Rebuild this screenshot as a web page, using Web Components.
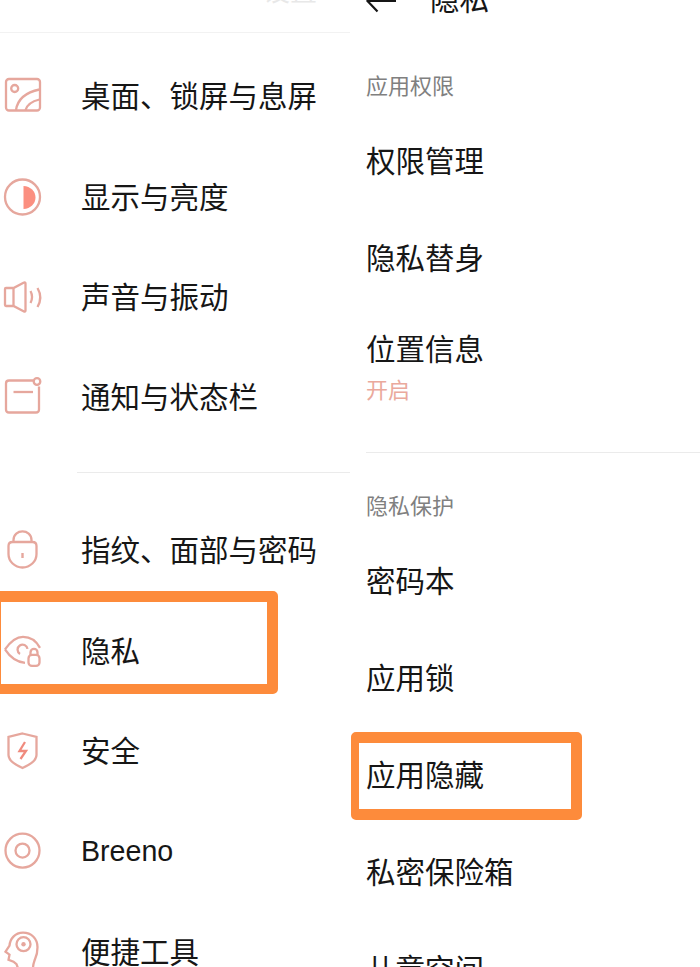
<!DOCTYPE html>
<html lang="zh">
<head>
<meta charset="utf-8">
<title>隐私</title>
<style>
  html, body { margin: 0; padding: 0; background: #fff; }
  body { width: 700px; height: 967px; overflow: hidden; font-family: "Liberation Sans", "Noto Sans CJK SC", sans-serif; }
</style>
</head>
<body>
<settings-shot>
  <settings-pane slot="left">
    <pane-top variant="main"></pane-top>
    <setting-row icon="wallpaper" first>桌面、锁屏与息屏</setting-row>
    <setting-row icon="display">显示与亮度</setting-row>
    <setting-row icon="sound">声音与振动</setting-row>
    <setting-row icon="notify">通知与状态栏</setting-row>
    <pane-divider inset="77" before="24.400" after="27"></pane-divider>
    <setting-row icon="lock">指纹、面部与密码</setting-row>
    <setting-row icon="privacy" mark>隐私</setting-row>
    <setting-row icon="shield">安全</setting-row>
    <setting-row icon="breeno" latin>Breeno</setting-row>
    <setting-row icon="head">便捷工具</setting-row>
  </settings-pane>
  <settings-pane slot="right">
    <pane-top variant="detail"></pane-top>
    <section-label top="18">应用权限</section-label>
    <plain-row>权限管理</plain-row>
    <plain-row>隐私替身</plain-row>
    <plain-row sub="开启">位置信息</plain-row>
    <pane-divider inset="16" before="0" after="0"></pane-divider>
    <section-label top="31">隐私保护</section-label>
    <plain-row>密码本</plain-row>
    <plain-row>应用锁</plain-row>
    <plain-row mark>应用隐藏</plain-row>
    <plain-row>私密保险箱</plain-row>
    <plain-row>儿童空间</plain-row>
  </settings-pane>
</settings-shot>

<script>
  // y = top of the 50x50 drawing window for each icon
  const ICONS = {
    wallpaper: { y: 71, d: `<rect x="6" y="79" width="34" height="31.500" rx="3" />
      <circle cx="14.700" cy="88.500" r="3.500" />
      <path d="M16 110c1.500-10 9-17.500 23.500-20.500M25.500 110c1.500-5 5.500-8.500 14-10.500" />` },
    display: { y: 170, d: `<circle cx="22.500" cy="195" r="17.500" />
      <path d="M23.500 184c7 .5 12 5 12 11.500s-5 11-12 11.500z" fill="#fb8f80" stroke="none" />` },
    sound: { y: 271, d: `<path d="M6 287h7.500l10.500-5.500c.7-.4 1.500 0 1.500 .9v27.200c0 .9-.8 1.300-1.500 .9l-10.500-5.500h-7.500c-.8 0-1-.5-1-1v-16c0-.5 .3-1 1-1z" />
      <path d="M13.500 287.500v17M30.500 290c1.800 3.500 1.800 8.500 0 12M37.500 287c3.500 6 3.500 13 0 19" />` },
    notify: { y: 372, d: `<path d="M33.500 380.500h-24.500c-2 0-3 1-3 3v26c0 2 1 3 3 3h27c2 0 3-1 3-3v-23" />
      <path d="M13.500 392h19.500" />
      <circle cx="37" cy="381.500" r="3.300" />` },
    lock: { y: 525, d: `<path d="M13.500 542v-2c0-11.500 18-11.500 18 0v2" />
      <path d="M8.500 546q0-4 4-4h20q4 0 4 4v8a14 13.500 0 0 1-28 0z" />
      <path d="M22.500 553v5" stroke-width="2.400" />` },
    privacy: { y: 625.600, d: `<path d="M5 649c7-10 13.500-12.500 18-12.500 6.500 0 13 3.500 17 11M5 649c4.500 7 10.500 12.500 20 13.500" />
      <path d="M27.500 648.500a5 5 0 1 0-7.500 5" />
      <rect x="28.500" y="654.500" width="11" height="11" rx="3.500" />
      <path d="M30.500 654.500v-2.500a3.500 3.500 0 0 1 7 0v2.500" />` },
    shield: { y: 726, d: `<path d="M22.500 733.500l14 3.500v18c0 5-6 9.500-14 13-8-3.500-14-8-14-13v-18z" />
      <path d="M25 742l-5.500 9h6.500l-5.500 8" stroke="#f08b7e" />` },
    breeno: { y: 826.400, d: `<circle cx="22.500" cy="851" r="17" />
      <circle cx="22.500" cy="851" r="7" />` },
    head: { y: 926.800, d: `<path d="M33 968c0-4 1-6 2-9 2-4 2.500-8 2.500-12 0-8.500-6-14.500-14.500-14.500-8 0-13 6-13.500 13l-4 6 4 3-1 5 5 2 3 2.500 1.500 4" />
      <circle cx="23.500" cy="944" r="7" />
      <circle cx="23.500" cy="944" r="2.200" fill="#e6a79d" stroke="none" />` }
  };

  // left and right panes side by side
  class SettingsShot extends HTMLElement {
    constructor() {
      super();
      this.attachShadow({ mode: 'open' });
      this.shadowRoot.innerHTML = `
        <style>
          :host { display: grid; grid-template-columns: 350px 350px; width: 700px; height: 967px; overflow: hidden; background: #fff; color: #161616; }
        </style>
        <slot name="left"></slot>
        <slot name="right"></slot>
      `;
    }
  }

  class SettingsPane extends HTMLElement {
    constructor() {
      super();
      this.attachShadow({ mode: 'open' });
      this.shadowRoot.innerHTML = `
        <style>
          :host { display: block; min-width: 0; height: 967px; }
        </style>
        <slot></slot>
      `;
    }
  }

  // the title strip, cut off by the top edge of the picture
  class PaneTop extends HTMLElement {
    constructor() {
      super();
      this.attachShadow({ mode: 'open' });
      const detail = this.getAttribute('variant') === 'detail';
      this.shadowRoot.innerHTML = `
        <style>
          :host { display: block; overflow: hidden; }
          .main { height: 32px; border-bottom: 1px solid #f2f2f2; overflow: hidden; }
          .main span { display: block; margin: -24px 0 0 263px; font-size: 27px; line-height: 32px; color: #e8e8e8; }
          .detail { height: 46px; display: flex; align-items: flex-start; }
          .detail svg { flex: none; width: 32px; height: 20px; margin: 0 32px 0 16px; }
          .detail span { font-size: 29.500px; line-height: 40px; margin-top: -20px; }
        </style>
        ${detail
          ? `<div class="detail">
               <svg viewBox="0 0 32 20"><path d="M30 1H1.500M11.500-8L1.500 1l10 10.500" fill="none" stroke="#161616" stroke-width="2.200"/></svg>
               <span>隐私</span>
             </div>`
          : `<div class="main"><span>设置</span></div>`}
      `;
    }
  }

  class PaneDivider extends HTMLElement {
    constructor() {
      super();
      this.attachShadow({ mode: 'open' });
      const a = (n) => this.getAttribute(n) + 'px';
      this.shadowRoot.innerHTML = `
        <style>
          :host { display: block; padding: ${a('before')} 0 ${a('after')} ${a('inset')}; }
          div { height: 1px; background: #ebebeb; }
        </style>
        <div></div>
      `;
    }
  }

  class SectionLabel extends HTMLElement {
    constructor() {
      super();
      this.attachShadow({ mode: 'open' });
      this.shadowRoot.innerHTML = `
        <style>
          :host { display: flex; align-items: center; height: 40px; padding: ${this.getAttribute('top')}px 0 8.500px 16px; font-size: 22px; color: #808080; }
        </style>
        <slot></slot>
      `;
    }
  }

  class SettingRow extends HTMLElement {
    constructor() {
      super();
      this.attachShadow({ mode: 'open' });
      const icon = ICONS[this.getAttribute('icon')];
      this.shadowRoot.innerHTML = `
        <style>
          :host { display: flex; align-items: center; position: relative; height: 100.400px; font-size: 29.500px; ${this.hasAttribute('first') ? 'margin-top: 13px;' : ''} }
          :host([latin]) { font-size: 28.600px; }
          svg { flex: none; width: 50px; height: 50px; margin-right: 31px; overflow: visible; }
          .text { padding-bottom: 4px; }
          :host([latin]) .text { padding-bottom: 0; }
          .mark { position: absolute; left: -10px; top: -9.400px; width: 266px; height: 82px; border: 11px solid #fd8b3b; border-bottom-width: 10px; border-radius: 5px; }
        </style>
        <svg viewBox="0 ${icon.y} 50 50" fill="none" stroke="#e6a79d" stroke-width="2.300">${icon.d}</svg>
        <div class="text"><slot></slot></div>
        ${this.hasAttribute('mark') ? '<div class="mark"></div>' : ''}
      `;
    }
  }

  class PlainRow extends HTMLElement {
    constructor() {
      super();
      this.attachShadow({ mode: 'open' });
      const sub = this.getAttribute('sub');
      this.shadowRoot.innerHTML = `
        <style>
          :host { display: block; position: relative; box-sizing: border-box; height: ${sub ? 145.5 : 97}px; padding: ${sub ? 17.5 : 23.5}px 0 0 16px; font-size: 29.500px; }
          .main { line-height: 52px; display: block; }
          .sub { font-size: 22px; line-height: 30px; color: #eaa99c; }
          .mark { position: absolute; left: 1px; top: 5.500px; width: 212px; height: 66px; border: 11px solid #fd8b3b; border-left-width: 8px; border-radius: 5px; }
        </style>
        <span class="main"><slot></slot></span>
        ${sub ? `<div class="sub">${sub}</div>` : ''}
        ${this.hasAttribute('mark') ? '<div class="mark"></div>' : ''}
      `;
    }
  }

  customElements.define('settings-shot', SettingsShot);
  customElements.define('settings-pane', SettingsPane);
  customElements.define('pane-top', PaneTop);
  customElements.define('pane-divider', PaneDivider);
  customElements.define('section-label', SectionLabel);
  customElements.define('setting-row', SettingRow);
  customElements.define('plain-row', PlainRow);
</script>
</body>
</html>
